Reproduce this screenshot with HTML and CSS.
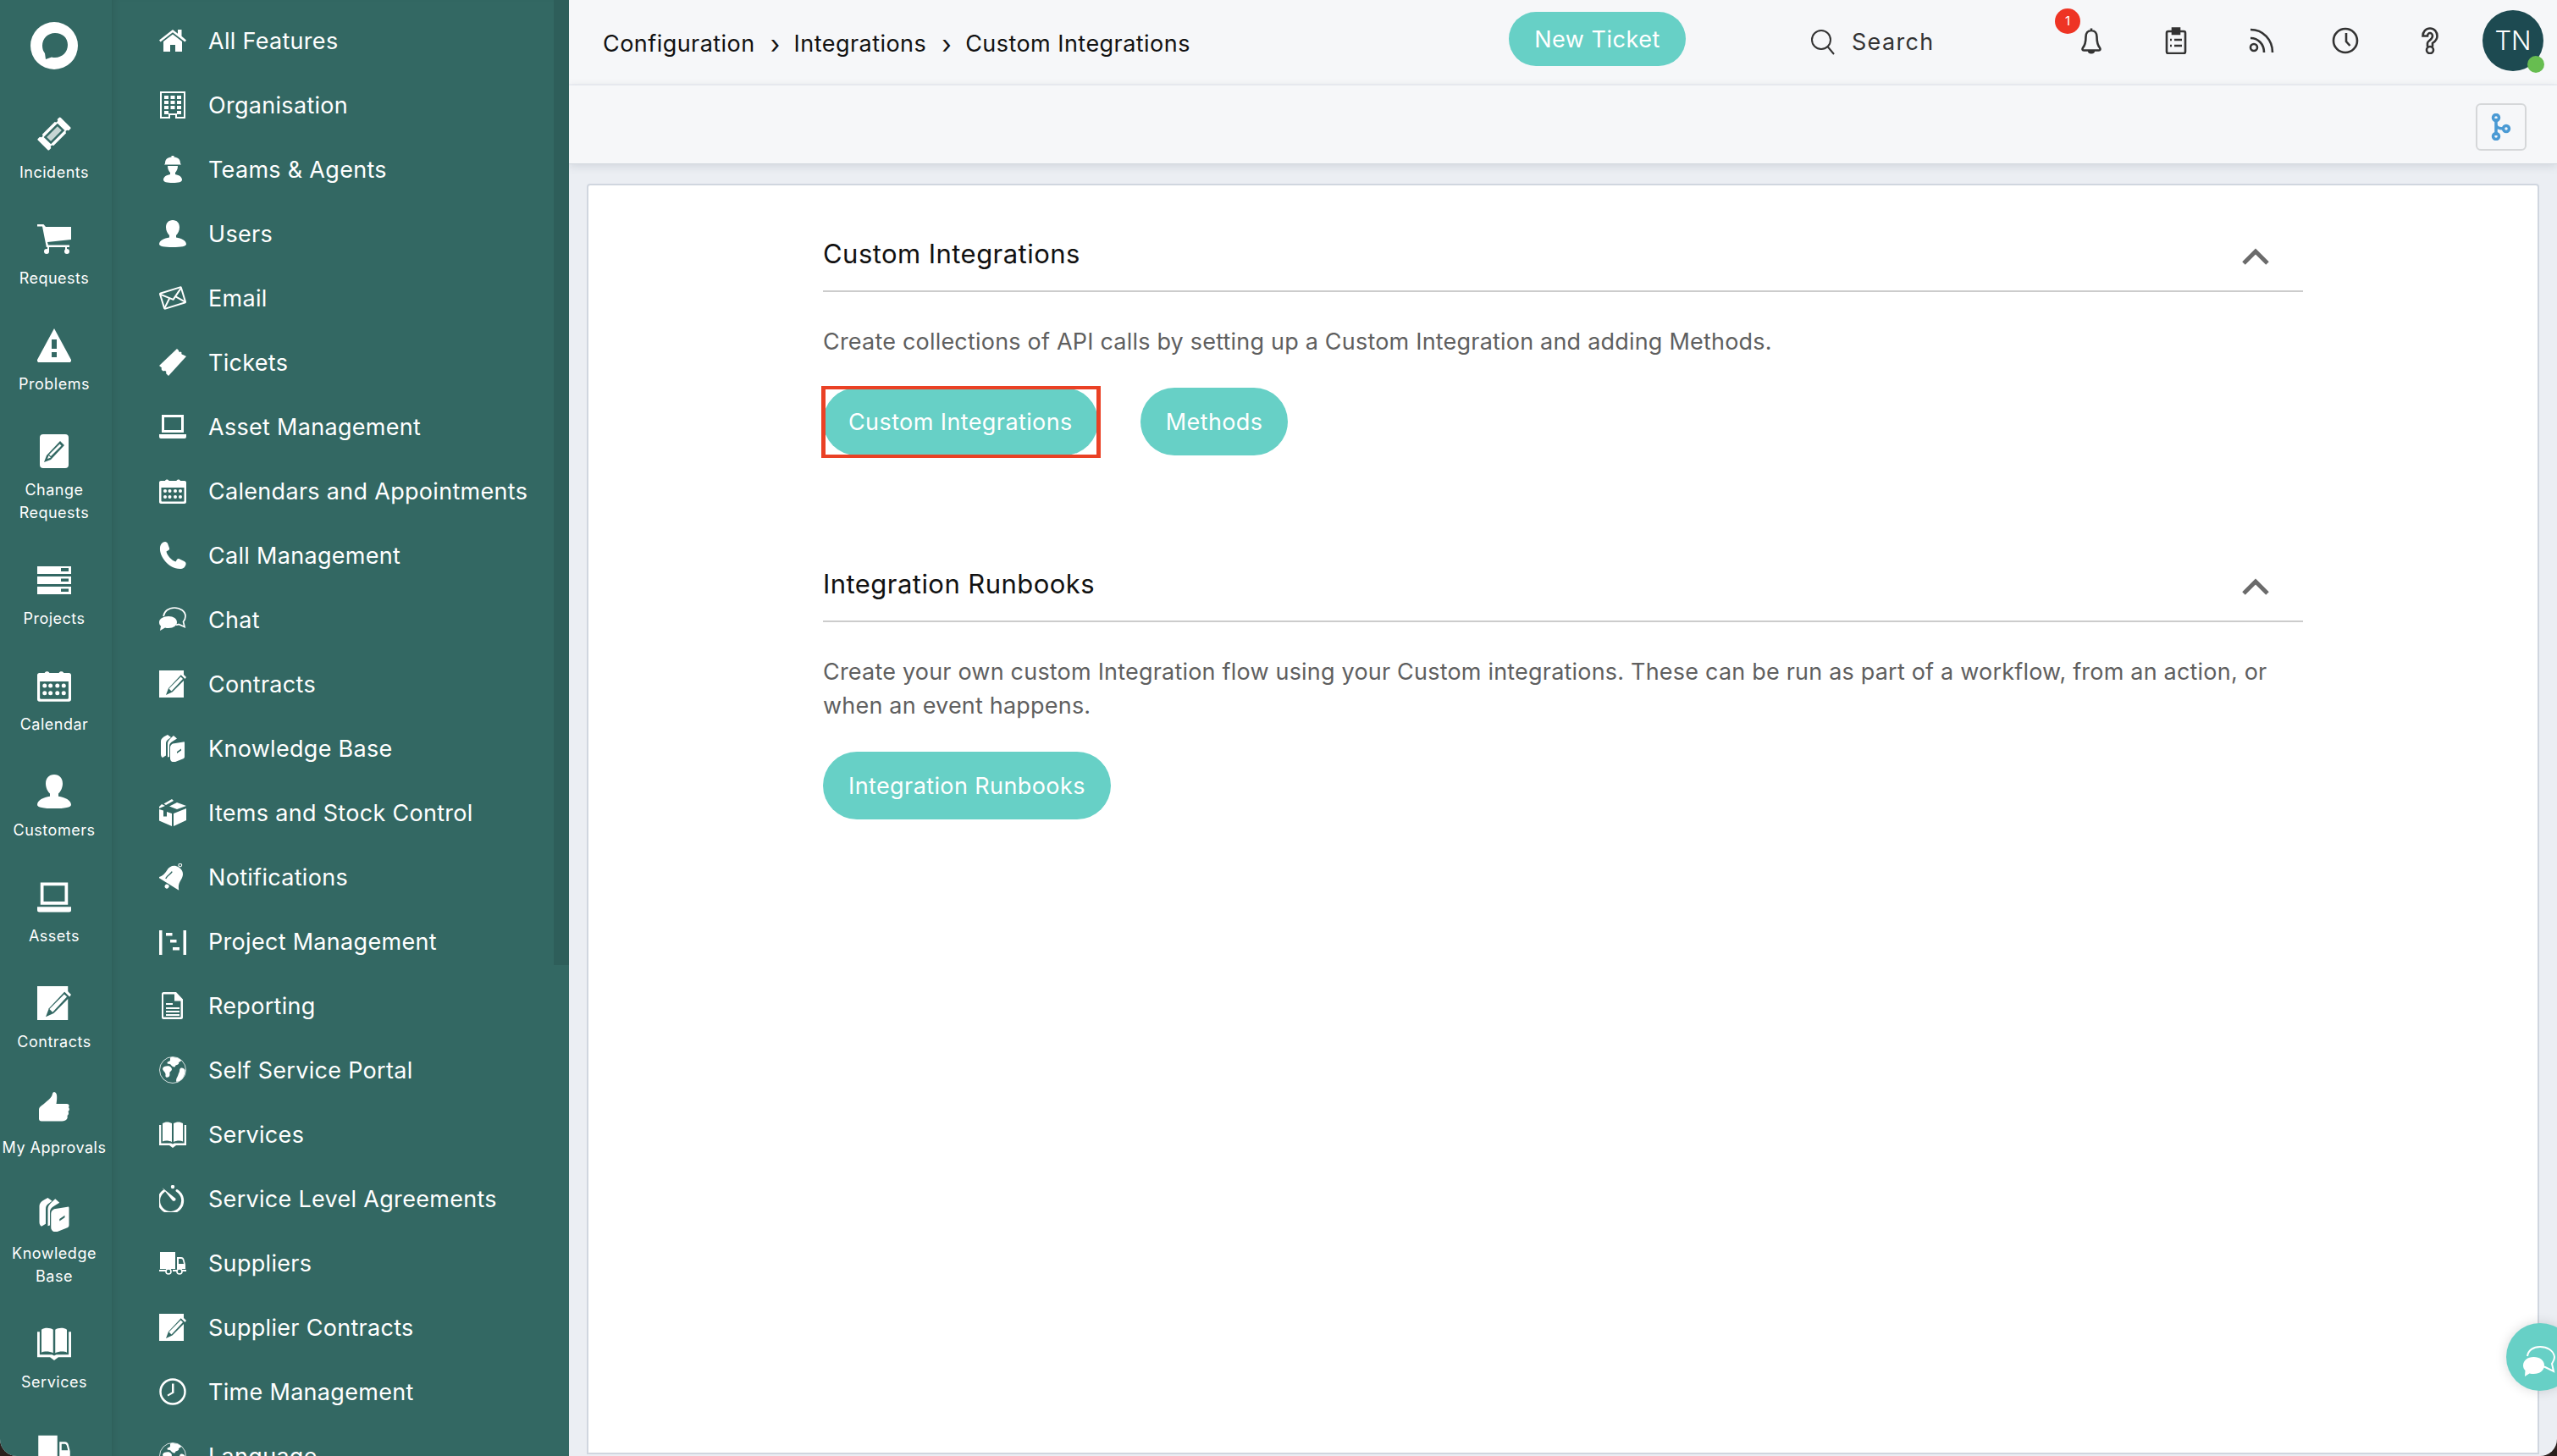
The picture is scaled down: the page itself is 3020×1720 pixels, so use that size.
FILE: index.html
```html
<!DOCTYPE html>
<html lang="en">
<head>
<meta charset="utf-8">
<title>Custom Integrations</title>
<link rel="stylesheet" href="styles.css">
</head>
<body>
<svg class="sprite" aria-hidden="true">
  <defs>
    <symbol id="i-home" viewBox="0 0 32 32"><path d="M0 15.5 16 3l6 4.700V3h4.500v7.700L32 15.500l-1.600 1.900L16 6.300 1.600 17.400Z"/><path d="M5 17 16 8.500 27 17v12h-8v-8h-6v8H5Z"/></symbol>
    <symbol id="i-building" viewBox="0 0 32 32"><path fill-rule="evenodd" d="M1 0h30v32H19v-4h-6v4H1ZM3 2v28h8v-4h10v4h8V2Z"/><path d="M6 5h5v4H6ZM13.500 5h5v4h-5ZM21 5h5v4h-5ZM6 11h5v4H6ZM13.500 11h5v4h-5ZM21 11h5v4h-5ZM6 17h5v4H6ZM13.500 17h5v4h-5ZM21 17h5v4h-5ZM6 23h5v4H6ZM21 23h5v4h-5Z"/></symbol>
    <symbol id="i-worker" viewBox="0 0 32 32"><path d="M7 9C7 4 10 2 14.500 1.500V0h3v1.500C22 2 25 4 25 9l1 1.500H6Z"/><path d="M10 12h12c0 4-1.500 6-3 8v2c5 1 8 3 8 6.500C27 31 23 32 16 32S5 31 5 28.500c0-3.500 3-5.500 8-6.500v-2c-1.500-2-3-4-3-8Z"/></symbol>
    <symbol id="i-user" viewBox="0 0 32 32"><path d="M16 0c5 0 8 3.500 8 8.500 0 4-2 7.500-4 9.500v2.500c6 1 12 3.500 12 8C32 31 26 32 16 32S0 31 0 28.500c0-4.500 6-7 12-8V18c-2-2-4-5.500-4-9.500C8 3.500 11 0 16 0Z"/></symbol>
    <symbol id="i-mail" viewBox="0 0 32 32"><g transform="rotate(-17 16 16)" fill="none" stroke="#fff" stroke-width="2" stroke-linejoin="round"><rect x="3" y="6.500" width="26" height="19" rx="1"/><path d="M3 7.500 16 18 29 7.500M3 25l9.500-10M29 25l-9.500-10"/></g></symbol>
    <symbol id="i-ticket" viewBox="0 0 32 32"><path d="M21 0l2 2c0 1.500 1 2.500 2.500 1.500l1 1c-.5 1.500 0 2.500 1.500 2.500L32 9 11 32l-3-3c1-1.500 0-3-1.500-3-1 .5-2 .5-3-.5-1-1-1-2-.5-3L0 20Z"/></symbol>
    <symbol id="i-ticket2" viewBox="0 0 40 40"><g transform="rotate(-45 20 20)"><rect x="1" y="10.500" width="38" height="19" rx="1.500"/><circle cx="7.500" cy="10.500" r="2" fill="#336863"/><circle cx="7.500" cy="29.500" r="2" fill="#336863"/><circle cx="32.500" cy="10.500" r="2" fill="#336863"/><circle cx="32.500" cy="29.500" r="2" fill="#336863"/><rect x="8.500" y="14" width="23" height="12" fill="#336863"/><rect x="11" y="16.500" width="18" height="7" fill="#fff" opacity=".72"/></g></symbol>
    <symbol id="i-laptop" viewBox="0 0 32 32"><path fill-rule="evenodd" d="M3 2h26v21H3Zm3 3v15h20V5Z"/><path d="M0 25h32v3a2 2 0 0 1-2 2H2a2 2 0 0 1-2-2Z"/></symbol>
    <symbol id="i-calendar" viewBox="0 0 32 32"><path fill-rule="evenodd" d="M2 4h5c.5-2 4-2 4.500 0h9c.5-2 4-2 4.500 0h5c1.100 0 2 .9 2 2v23c0 1.100-.9 2-2 2H2c-1.100 0-2-.9-2-2V6c0-1.100.9-2 2-2Zm.5 8v15.500c0 .5.500 1 1 1h25c.5 0 1-.500 1-1V12Z"/><g><circle cx="7" cy="16" r="2"/><circle cx="12.500" cy="16" r="2"/><circle cx="19" cy="16" r="2"/><circle cx="25" cy="16" r="2"/><circle cx="7" cy="23" r="2"/><circle cx="12.500" cy="23" r="2"/><circle cx="19" cy="23" r="2"/><circle cx="25" cy="23" r="2"/></g></symbol>
    <symbol id="i-phone" viewBox="0 0 32 32"><path d="M7 0c1.500 0 2.500 1 3 2l2 5.500c.3 1 0 2-1 2.500L8.500 11.500c1 5 6 10.500 11 12l1.500-2.500c.7-1 1.700-1.200 2.700-.8L29.500 23c1.500.7 2.500 2 2 4-1 3-3 5-7 5C11 32 0 17 1 7c.3-4 3-7 6-7Z"/></symbol>
    <symbol id="i-chat" viewBox="0 0 32 32"><path fill="none" stroke="#fff" stroke-width="1.700" d="M5 12C6 6 11 2 18 2c7 0 13 4 13 10 0 3-1.200 5-2.500 6.500l1.500 6-7-3c-1 .5-2 .5-3 .6"/><path d="M11 12c6 0 10 3 10 7s-4 7-10 7c-1.500 0-3 0-4-.5L1 29l1-5.500C.7 22.500 0 21 0 19c0-4 5-7 11-7Z"/></symbol>
    <symbol id="i-contract" viewBox="0 0 32 32"><path d="M0 0h29v32H0Z"/><path fill="#336863" d="M26 5 11 21l-3 8 7.500-3.500L31 10Z"/><path d="M11.500 21.500l3 3L28 10l-2.500-2.500Z"/><path d="M27 3l5 5-1.500 2-5-5Z" fill="#fff"/></symbol>
    <symbol id="i-books" viewBox="0 0 32 32"><path d="M10 0l4 3-4 3c-1.500 1.200-2 2.500-2 4.500v14L4 27C2.500 26 2 24.500 2 23V8C2 4 6 2 10 0Z"/><path d="M17 1l4 3.500L15.500 8c-2 1.300-3.500 3-3.500 5v13l-2 .5V11c0-3.500 2-5.500 7-10Z"/><path fill-rule="evenodd" d="M28.500 8.500c1.300-.5 1.500.2 1.500 1.500v15.500c0 1.500-.5 2-1.500 2.700L19 32c-3.500 1-6-1-6-4V15c0-2.500 1.500-3.500 3-4.500Zm-2.500 8L21 20v2l5-3.500Z"/></symbol>
    <symbol id="i-box" viewBox="0 0 32 32"><path d="M0 9 3 6l4 2-7 3Z"/><path d="M15 0l2 2L8 7 5.500 5.500Z"/><path d="M21 4l11 4-11 4-9-3.500ZM0 12l5 1.500v7h4V15l6 2v15L0 25.500ZM17 17l15-6v14l-15 7Z"/></symbol>
    <symbol id="i-bell" viewBox="0 0 32 32"><g transform="rotate(32 16 16)"><path d="M16 2.500c-6.500 0-10 4.500-10 10.500 0 6.500-1.500 9-4.500 12.500h29c-3-3.500-4.500-6-4.500-12.500 0-6-3.500-10.500-10-10.500Z"/><circle cx="16" cy="-.5" r="1.800" fill="none" stroke="#fff" stroke-width="1"/><circle cx="16" cy="29" r="2.500"/><path d="M10 22c-.5-5 2-6 2-11" fill="none" stroke="#336863" stroke-width="1.400"/></g></symbol>
    <symbol id="i-gantt" viewBox="0 0 32 32"><path d="M0 3h3.500v29H0ZM28.500 3H32v29h-3.500ZM8 6h7.500v3.500H8ZM13 14h7.500v3.500H13ZM16 23h8v3.500h-8Z"/></symbol>
    <symbol id="i-doc" viewBox="0 0 32 32"><path fill-rule="evenodd" d="M5 0h15l8 8.500V30c0 1-.8 2-2 2H5c-1.200 0-2-1-2-2V2c0-1 .8-2 2-2Zm0 2.500v27h20.500V10.500H18v-8Z"/><path d="M8 13h8v2H8ZM8 18h16v2H8ZM8 22h16v2H8ZM8 26h16v2H8Z"/></symbol>
    <symbol id="i-globe" viewBox="0 0 32 32"><circle cx="16" cy="16" r="15.500" fill="none" stroke="#fff" stroke-width=".8"/><path d="M13 1.500c3-1 9-.5 13 3 .5 1-3 2-3 3 1 1-1 2.500-3.500 3l-1 2c-3 0-4-2-5-3s-4 0-4-2 3-1 3.500-3ZM6 12c3-1 7-1 8 1 2 2 .5 4-1 5s.5 4-1.500 6c-2 1.500-4.500 1-4-2s-2-4-3-6 0-3 1.500-4ZM25 14c2-1 4.500 0 5.500 2 .5 3-1 8-4 11-2 2-4.500 3-6 3-1-2 0-4 1-6s1-3 2-5 0-3 1.500-5Z"/></symbol>
    <symbol id="i-book" viewBox="0 0 32 32"><path d="M4 3C7 .8 12 1 15 3v22c-3-1.500-8-2-11-.5ZM28 3c-3-2.200-8-2-11 0v22c3-1.500 8-2 11-.5Z"/><path d="M0 5h2.300v21.500H14l2 1 2-1h11.700V5H32v24H20l-4 3-4-3H0Z"/></symbol>
    <symbol id="i-timer" viewBox="0 0 32 32"><path fill="none" stroke="#fff" stroke-width="3" stroke-linecap="round" d="M21 6.500A14 14 0 1 1 5.500 7"/><circle cx="16" cy="2" r="2.200"/><path d="M3.500 3 19 15.500c1 1.300.5 2.500-.5 3s-2 .5-3-.5Z"/></symbol>
    <symbol id="i-truck" viewBox="0 0 32 32"><path d="M1 3h18v20H1ZM21 9h5c2 0 3 1 3.500 3l1.500 6v5H21Zm2 2v6h6l-1-4c-.3-1.300-1-2-2-2Z"/><path d="M0 24h8v2H0ZM16 24h5v2h-5ZM27 24h5v2h-5Z"/><circle cx="11" cy="26" r="3" fill="none" stroke="#fff" stroke-width="1.600"/><circle cx="24" cy="26" r="3" fill="none" stroke="#fff" stroke-width="1.600"/></symbol>
    <symbol id="i-clock" viewBox="0 0 32 32"><circle cx="16" cy="16" r="14.500" fill="none" stroke="#fff" stroke-width="2.500"/><path d="M17.500 6.500v11l-7 4 -1-1.800 5.500-3.200v-10Z"/></symbol>
    <symbol id="i-cart" viewBox="0 0 40 40"><path d="M0 2h7.500l2.500 3h30v15L12 23l1 3.500h25V29H10.800L6 4.500H0Z"/><circle cx="11" cy="34" r="3"/><circle cx="35" cy="34" r="3"/><path d="M12 29h2v4h-2ZM33 29h2v4h-2Z"/></symbol>
    <symbol id="i-warn" viewBox="0 0 40 40"><path fill-rule="evenodd" d="M20 0 40 37c.3 1.500-.5 3-2 3H2c-1.500 0-2.300-1.500-2-3ZM17 13v11h6V13Zm0 15v6h6v-6Z"/></symbol>
    <symbol id="i-pencil" viewBox="0 0 40 40"><rect x="3" y="0" width="34" height="40" rx="4"/><path fill="#336863" d="M27 8l5 5-16 17-8 3 3-8ZM16 27.500l-2.500-2.500-1.500 4Z"/><path d="M14 24 26.500 11.500l2 2L16 26Z" fill="#fff"/></symbol>
    <symbol id="i-server" viewBox="0 0 40 40"><path fill-rule="evenodd" d="M0 4h40v9H0Zm28 2v4h9V6ZM0 16h40v9H0Zm28 2.500V22h9v-3.500ZM0 28h40v9H0Zm28 2.500V34h9v-3.500Z"/></symbol>
    <symbol id="i-thumb" viewBox="0 0 40 40"><path d="M20 0c4 .5 3.500 7 2.500 14H35c3 0 3 3 2 4 1.500 2 1 4-.5 5 1 2 .5 4-1 5 .5 2 0 4-1.500 5-1.500 1-4 1.500-7 1.500H5c-2 0-3-1-3-3V21C2 17 6 16 9 13c3-2.500 6-5 8-8 1-2 1-5 3-5Z"/></symbol>
    <symbol id="i-logo" viewBox="0 0 56 56"><path fill-rule="evenodd" d="M28 0a28 28 0 1 1 0 56 28 28 0 0 1 0-56Zm1 13c-8.500 0-15 6.500-15 15 0 3.500 1 6.500 3 9l1 7 7-2.500c1.200.4 2.500.5 4 .5 8.500 0 15-6.500 15-15s-6.500-14-15-14Z"/></symbol>
  </defs>
</svg>

<div class="app">
  <nav class="rail">
    <svg class="logo ico"><use href="#i-logo"/></svg>
    <a class="rail-item"><svg class="rail-ico ico"><use href="#i-ticket2"/></svg><span>Incidents</span></a>
    <a class="rail-item"><svg class="rail-ico ico"><use href="#i-cart"/></svg><span>Requests</span></a>
    <a class="rail-item"><svg class="rail-ico ico"><use href="#i-warn"/></svg><span>Problems</span></a>
    <a class="rail-item"><svg class="rail-ico ico"><use href="#i-pencil"/></svg><span>Change<br>Requests</span></a>
    <a class="rail-item"><svg class="rail-ico ico"><use href="#i-server"/></svg><span>Projects</span></a>
    <a class="rail-item"><svg class="rail-ico ico"><use href="#i-calendar"/></svg><span>Calendar</span></a>
    <a class="rail-item"><svg class="rail-ico ico"><use href="#i-user"/></svg><span>Customers</span></a>
    <a class="rail-item"><svg class="rail-ico ico"><use href="#i-laptop"/></svg><span>Assets</span></a>
    <a class="rail-item"><svg class="rail-ico ico"><use href="#i-contract"/></svg><span>Contracts</span></a>
    <a class="rail-item"><svg class="rail-ico ico"><use href="#i-thumb"/></svg><span>My Approvals</span></a>
    <a class="rail-item"><svg class="rail-ico ico"><use href="#i-books"/></svg><span>Knowledge<br>Base</span></a>
    <a class="rail-item"><svg class="rail-ico ico"><use href="#i-book"/></svg><span>Services</span></a>
    <a class="rail-item"><svg class="rail-ico ico"><use href="#i-truck"/></svg><span>Suppliers</span></a>
  </nav>

  <aside class="panel">
    <ul class="menu">
      <li><svg class="ico"><use href="#i-home"/></svg>All Features</li>
      <li><svg class="ico"><use href="#i-building"/></svg>Organisation</li>
      <li><svg class="ico"><use href="#i-worker"/></svg>Teams &amp; Agents</li>
      <li><svg class="ico"><use href="#i-user"/></svg>Users</li>
      <li><svg class="ico"><use href="#i-mail"/></svg>Email</li>
      <li><svg class="ico"><use href="#i-ticket"/></svg>Tickets</li>
      <li><svg class="ico"><use href="#i-laptop"/></svg>Asset Management</li>
      <li><svg class="ico"><use href="#i-calendar"/></svg>Calendars and Appointments</li>
      <li><svg class="ico"><use href="#i-phone"/></svg>Call Management</li>
      <li><svg class="ico"><use href="#i-chat"/></svg>Chat</li>
      <li><svg class="ico"><use href="#i-contract"/></svg>Contracts</li>
      <li><svg class="ico"><use href="#i-books"/></svg>Knowledge Base</li>
      <li><svg class="ico"><use href="#i-box"/></svg>Items and Stock Control</li>
      <li><svg class="ico"><use href="#i-bell"/></svg>Notifications</li>
      <li><svg class="ico"><use href="#i-gantt"/></svg>Project Management</li>
      <li><svg class="ico"><use href="#i-doc"/></svg>Reporting</li>
      <li><svg class="ico"><use href="#i-globe"/></svg>Self Service Portal</li>
      <li><svg class="ico"><use href="#i-book"/></svg>Services</li>
      <li><svg class="ico"><use href="#i-timer"/></svg>Service Level Agreements</li>
      <li><svg class="ico"><use href="#i-truck"/></svg>Suppliers</li>
      <li><svg class="ico"><use href="#i-contract"/></svg>Supplier Contracts</li>
      <li><svg class="ico"><use href="#i-clock"/></svg>Time Management</li>
      <li><svg class="ico"><use href="#i-globe"/></svg>Language</li>
    </ul>
    <div class="scrollbar"></div>
  </aside>

  <main class="main">
    <header class="topbar">
      <div class="crumbs"><span>Configuration</span><i>›</i><span>Integrations</span><i>›</i><span>Custom Integrations</span></div>
      <button class="new-ticket">New Ticket</button>
      <div class="search">
        <svg class="search-ico" viewBox="0 0 30 30"><circle cx="13" cy="12" r="11"/><path d="M20.500 20 28 29"/></svg>
        <span>Search</span>
      </div>
      <div class="tools">
        <div class="tool">
          <span class="badge">1</span>
          <svg viewBox="0 0 32 32"><path d="M16 1.500v2.500M16 4c-4 0-6.500 3-6.500 7.500 0 7-1 10-3.500 13-1 1.500-.5 3 1 3h18c1.500 0 2-1.500 1-3-2.500-3-3.500-6-3.500-13C22.500 7 20 4 16 4ZM13 27.500c0 3.500 6 3.500 6 0"/></svg>
        </div>
        <div class="tool">
          <svg viewBox="0 0 32 32"><rect x="5" y="5" width="22" height="26" rx="2"/><path class="solid" d="M12 1.500h8V8h-8Z"/><path d="M14 15h9M14 22h9"/><path d="M9 15h2M9 22h2"/></svg>
        </div>
        <div class="tool">
          <svg viewBox="0 0 32 32"><circle cx="8" cy="24" r="4"/><path d="M4 13c9 0 16 7 16 17M4 3c15 0 26 12 26 27"/></svg>
        </div>
        <div class="tool">
          <svg viewBox="0 0 32 32"><circle cx="16" cy="16" r="14"/><path d="M17 7v10l4.500 5"/></svg>
        </div>
        <div class="tool">
          <svg viewBox="0 0 32 32"><path d="M13 23v-4c0-3 6-4 6-8.500C19 8.500 17.500 7 16 7s-3 1.500-3 3.500H7.500C7.500 5.500 11 1.500 16 1.500s8.500 4 8.500 9c0 5-3.500 7-5.500 8.500v4"/><circle cx="16" cy="27" r="4"/></svg>
        </div>
      </div>
      <div class="avatar">TN<span class="status"></span></div>
    </header>

    <div class="subbar">
      <button class="branch">
        <svg viewBox="0 0 32 32"><path d="M10 6v20M10 13c0 3 3 5 9 5"/><circle cx="10" cy="5" r="3.500"/><circle cx="10" cy="27" r="3.500"/><circle cx="22" cy="18" r="3.500"/></svg>
      </button>
    </div>

    <div class="content">
      <article class="card">
        <section class="block">
          <div class="block-head">
            <h2>Custom Integrations</h2>
            <svg class="chevron" viewBox="0 0 34 22"><path d="M3 19 17 5l14 14"/></svg>
          </div>
          <p>Create collections of API calls by setting up a Custom Integration and adding Methods.</p>
          <div class="actions">
            <a class="pill highlighted">Custom Integrations</a>
            <a class="pill">Methods</a>
          </div>
        </section>
        <section class="block">
          <div class="block-head">
            <h2>Integration Runbooks</h2>
            <svg class="chevron" viewBox="0 0 34 22"><path d="M3 19 17 5l14 14"/></svg>
          </div>
          <p>Create your own custom Integration flow using your Custom integrations. These can be run as part of a workflow, from an action, or when an event happens.</p>
          <div class="actions">
            <a class="pill">Integration Runbooks</a>
          </div>
        </section>
      </article>
    </div>

    <button class="chat-fab">
      <svg viewBox="0 0 40 36"><path d="M5 12C6 5 12 1 20 1c8 0 16 4 17 12 0 4-2 6-3 8l2 9-10-5-3-1"/><path class="solid" d="M12.500 13c7 0 12.500 4 12.500 10s-5.500 10-12.500 10c-2 0-3 0-5-.5L2 36l.5-7C1 27.500 0 25.500 0 23c0-6 5.500-10 12.500-10Z"/></svg>
    </button>
  </main>
</div>
</body>
</html>
```

FILE: styles.css
```css
* { box-sizing: border-box; }
html, body { margin: 0; height: 100%; background: #2a1f1c; }
body { font-family: Inter, "Open Sans", sans-serif; overflow: hidden; }
.sprite { position: absolute; width: 0; height: 0; }
.ico { fill: #fff; }

.app {
  display: flex;
  width: 3020px;
  height: 1720px;
  overflow: hidden;
  border-radius: 0 0 20px 20px;
  background: #ebeef3;
}

/* icon rail */
.rail {
  flex: 0 0 132px;
  height: 1720px;
  overflow: hidden;
  background: #336863;
  color: #fff;
  display: flex;
  flex-direction: column;
  align-items: center;
  padding: 26px 4px 0 0;
  gap: 46px;
}
.logo { width: 56px; height: 56px; flex: none; margin-bottom: 10px; }
.rail-item {
  display: flex;
  flex-direction: column;
  align-items: center;
  gap: 12px;
  width: 128px;
  flex: none;
  text-align: center;
  font-size: 18px;
  letter-spacing: .5px;
  line-height: 27px;
  white-space: nowrap;
}
.rail-ico { width: 40px; height: 40px; display: block; }

/* feature panel */
.panel {
  flex: 0 0 540px;
  height: 1720px;
  overflow: hidden;
  display: flex;
  align-items: flex-start;
  background: #336863;
  box-shadow: inset 8px 0 8px -6px rgba(0, 0, 0, .1);
  color: #fff;
}
.menu {
  list-style: none;
  margin: 0;
  padding: 10px 0 0 56px;
  flex: 1;
  min-width: 0;
}
.menu li {
  display: flex;
  align-items: center;
  gap: 26px;
  height: 76px;
  font-size: 27px;
  letter-spacing: .3px;
  white-space: nowrap;
}
.menu .ico { width: 32px; height: 32px; flex: none; }
.scrollbar { flex: 0 0 18px; height: 1140px; background: #2e5e5a; }

/* main column */
.main {
  flex: 1;
  min-width: 0;
  position: relative;
  display: flex;
  flex-direction: column;
  overflow: hidden;
}
.topbar {
  flex: 0 0 101px;
  display: flex;
  align-items: center;
  padding-left: 40px;
  background: #f6f7f9;
  border-bottom: 2px solid #eef0f5;
}
.crumbs {
  flex: 0 0 1070px;
  display: flex;
  align-items: center;
  font-size: 27px;
  letter-spacing: .45px;
  color: #111;
  padding-top: 4px;
}
.crumbs i {
  font-style: normal;
  font-size: 30px;
  line-height: 30px;
  margin: 0 16px 0 18px;
}
.new-ticket {
  flex: 0 0 209px;
  height: 64px;
  align-self: flex-start;
  margin-top: 14px;
  border: 0;
  border-radius: 32px;
  background: #67d0c6;
  color: #fff;
  font: inherit;
  font-size: 27px;
  letter-spacing: .5px;
  padding: 0;
}
.search {
  flex: 0 0 316px;
  margin-left: 147px;
  display: flex;
  align-items: center;
  gap: 19px;
  font-size: 27px;
  letter-spacing: 1.3px;
  color: #333;
}
.search-ico { width: 30px; height: 30px; fill: none; stroke: #333; stroke-width: 2; }
.tools { display: flex; gap: 68px; margin-bottom: 3px; }
.tool { position: relative; width: 32px; height: 32px; }
.tool svg {
  display: block;
  width: 32px;
  height: 32px;
  fill: none;
  stroke: #333;
  stroke-width: 2.600;
}
.tool .solid { fill: #333; }
.badge {
  position: absolute;
  left: -27px;
  top: -22px;
  width: 30px;
  height: 30px;
  border-radius: 50%;
  background: #ee3424;
  color: #fff;
  font-size: 15px;
  line-height: 30px;
  text-align: center;
}
.avatar {
  position: relative;
  flex: none;
  width: 72px;
  height: 72px;
  margin: 0 0 3px 46px;
  border-radius: 50%;
  background: #1d4a51;
  color: #fff;
  font-size: 31px;
  font-weight: 300;
  line-height: 72px;
  text-align: center;
}
.status {
  position: absolute;
  left: 53px;
  top: 54px;
  width: 20px;
  height: 20px;
  border-radius: 50%;
  background: #67bd50;
}
.subbar {
  flex: 0 0 93px;
  display: flex;
  justify-content: flex-end;
  align-items: flex-start;
  padding: 21px 36px 0 0;
  background: #f6f7f9;
  border-bottom: 1px solid #d3d8df;
  box-shadow: 0 2px 10px rgba(100, 110, 125, .2);
  position: relative;
}
.branch {
  width: 60px;
  height: 56px;
  padding: 0;
  display: flex;
  align-items: center;
  justify-content: center;
  border: 2px solid #d5d7d9;
  border-radius: 6px;
  background: #f6f7f9;
}
.branch svg { width: 32px; height: 32px; fill: none; stroke: #4a9ad4; stroke-width: 3.500; }

.content { flex: 1; min-height: 0; padding: 23px 21px 2px; }
.card {
  height: 100%;
  background: #fff;
  border: 2px solid #d0d6df;
  border-radius: 4px 4px 0 0;
  padding: 59px 0 0 277px;
}
.block { width: 1748px; margin-bottom: 130px; }
.block-head {
  display: flex;
  justify-content: space-between;
  align-items: center;
  padding-bottom: 21px;
  border-bottom: 2px solid #ccc;
}
.block-head h2 {
  margin: 0;
  font-size: 31px;
  letter-spacing: .45px;
  font-weight: 400;
  line-height: 44px;
  color: #111;
}
.chevron {
  width: 34px;
  height: 22px;
  margin: 6px 39px 0 0;
  fill: none;
  stroke: #6b6b6b;
  stroke-width: 5;
}
.block p {
  margin: 39px 0 0;
  font-size: 27px;
  letter-spacing: .2px;
  line-height: 40px;
  color: #5f5f5f;
}
.actions { display: flex; gap: 50px; margin-top: 34px; }
.pill {
  position: relative;
  display: flex;
  align-items: center;
  height: 80px;
  padding: 0 30px;
  border-radius: 40px;
  background: #67d0c6;
  color: #fff;
  font-size: 27px;
  letter-spacing: .4px;
  white-space: nowrap;
}
.highlighted::after {
  content: "";
  position: absolute;
  left: -2px;
  top: -2px;
  right: -3px;
  bottom: -3px;
  border-style: solid;
  border-color: #ea4125;
  border-width: 4px 5px;
}
.chat-fab {
  position: absolute;
  left: 2288px;
  top: 1563px;
  width: 80px;
  height: 80px;
  padding: 27px 0 0 20px;
  border: 0;
  border-radius: 50%;
  background: #67d0c6;
  box-shadow: 0 0 14px rgba(0, 0, 0, .15);
  display: flex;
  align-items: flex-start;
  justify-content: flex-start;
}
.chat-fab svg { width: 40px; height: 36px; fill: none; stroke: #fff; stroke-width: 2; flex: none; overflow: visible; }
.chat-fab .solid { fill: #fff; stroke: none; }
```
